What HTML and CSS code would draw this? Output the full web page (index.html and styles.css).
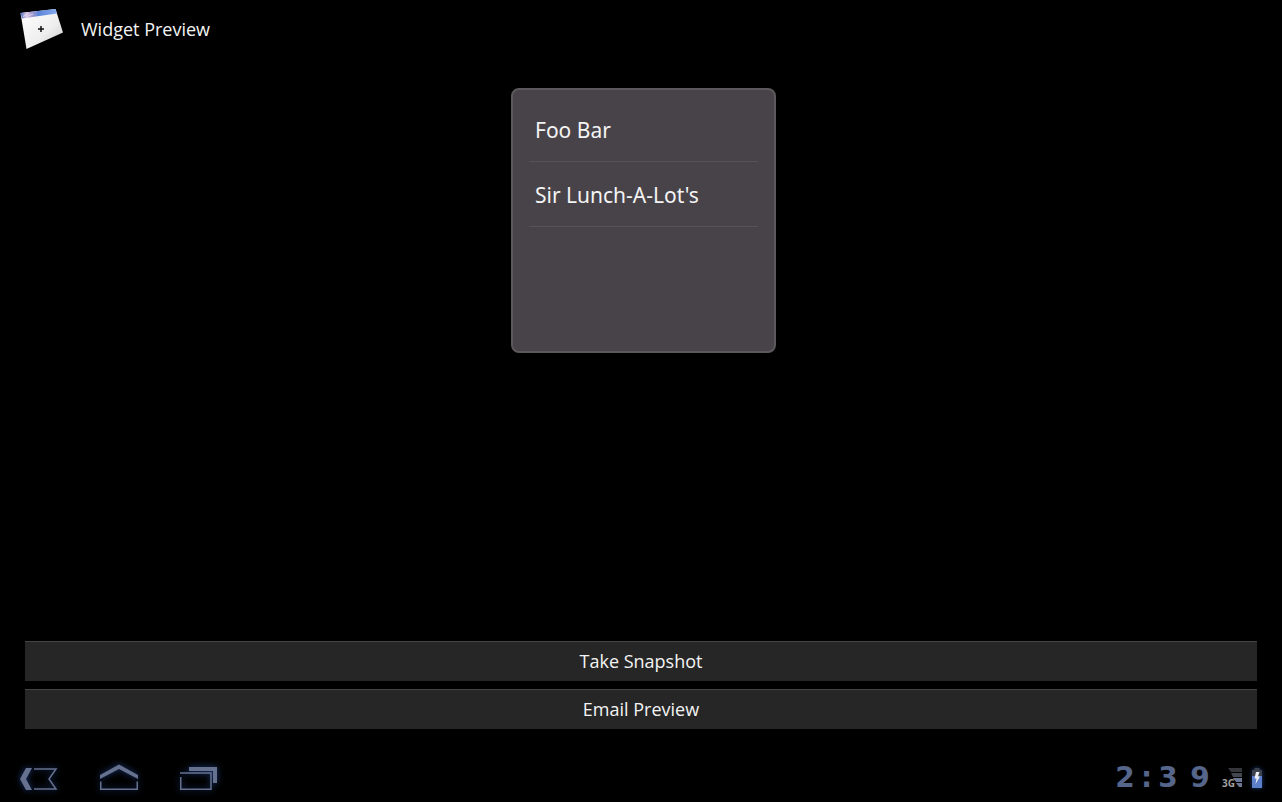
FILE: index.html
```html
<!DOCTYPE html>
<html lang="en">
<head>
<meta charset="utf-8">
<title>Widget Preview</title>
<link rel="stylesheet" href="styles.css">
</head>
<body>
<header class="title-bar">
  <svg class="app-icon" width="56" height="50" viewBox="0 0 56 50" aria-hidden="true">
    <defs>
      <linearGradient id="page" x1="0" y1="0" x2="1" y2="1"><stop offset="0" stop-color="#fff"/><stop offset=".6" stop-color="#eeeeee"/><stop offset="1" stop-color="#c8c8c8"/></linearGradient>
      <linearGradient id="strip" x1="0" y1="0" x2="1" y2="0"><stop offset="0" stop-color="#4568c0"/><stop offset=".15" stop-color="#d8c8e8"/><stop offset=".3" stop-color="#a99bd0"/><stop offset=".5" stop-color="#5c86d8"/><stop offset="1" stop-color="#86aaf0"/></linearGradient>
    </defs>
    <path d="M6.500 9L41.500 5L49 28.500L12.500 45Z" fill="url(#page)"/>
    <path d="M6.500 9L41.500 5L43 9.500L8 14.500Z" fill="url(#strip)"/>
    <path d="M9 12.500L15 9.500M13 12.500L19 10" stroke="#efe4f4" stroke-width="1" opacity=".7"/>
    <path d="M24 25H30M27 22V28" stroke="#111" stroke-width="1.500"/>
  </svg>
  <h1 class="title">Widget Preview</h1>
</header>
<main class="stage">
  <ul class="widget">
    <li class="widget-row">Foo Bar</li>
    <li class="widget-row">Sir Lunch-A-Lot's</li>
  </ul>
</main>
<div class="actions">
  <button class="action" type="button">Take Snapshot</button>
  <button class="action" type="button">Email Preview</button>
</div>
<footer class="system-bar">
  <nav class="nav">
    <button class="nav-button" type="button" aria-label="Back">
      <svg width="60" height="46" viewBox="0 0 60 46"><path d="M16 13H22L16 24L22 35H16L10 24Z" fill="#66718f"/><path d="M24 14H46L39 24L46 34H24" fill="none" stroke="#66718f" stroke-width="1.500"/></svg>
    </button>
    <button class="nav-button" type="button" aria-label="Home">
      <svg width="60" height="46" viewBox="0 0 60 46"><path d="M10 20L29 9.500L48 20V24L29 14L10 24Z" fill="#66718f"/><path d="M10.750 26.500V34.250H47.250V26.500" fill="none" stroke="#66718f" stroke-width="1.500"/></svg>
    </button>
    <button class="nav-button" type="button" aria-label="Recent apps">
      <svg width="60" height="46" viewBox="0 0 60 46"><path d="M19 12H47V28H43V16H19Z" fill="#66718f"/><path d="M10 18H41V34.250H10.750V22" fill="none" stroke="#66718f" stroke-width="1.500"/></svg>
    </button>
  </nav>
  <div class="status">
    <time class="clock" datetime="14:39"><span>2</span><span>:</span><span>3</span><span>9</span></time>
    <div class="signal">
      <svg width="15" height="22" viewBox="0 0 15 22" aria-hidden="true"><path d="M1 1H15V5H4Z" fill="#34363c"/><path d="M4 6H15V10H6Z" fill="#41464f"/><path d="M6 11H15V15H9Z" fill="#6b7894"/><path d="M9 16H15V20H12Z" fill="#6b7894"/></svg>
      <span class="network">3G</span>
    </div>
    <svg class="battery" width="12" height="22" viewBox="0 0 12 22" role="img" aria-label="Battery charging">
      <path d="M3.500 1H8.500V3H11V9H1V3H3.500Z" fill="#3d414b"/><path d="M1 9H11V21H1Z" fill="#5d7fca"/><path d="M5 5H8.500L7 9.500H9L4.500 17L5.500 11.500H3.500Z" fill="#eef0f6"/>
    </svg>
  </div>
</footer>
</body>
</html>
```
FILE: styles.css
```css
* { box-sizing: border-box; }
body {
  margin: 0;
  min-height: 100vh;
  display: flex;
  flex-direction: column;
  background: #000;
  color: #f4f4f4;
  font-family: "Open Sans", "Noto Sans", sans-serif;
}
.title-bar {
  display: flex;
  align-items: center;
  gap: 11px;
  height: 58px;
  padding-left: 14px;
}
.app-icon { display: block; }
.title { margin: 0; font-size: 18px; font-weight: 400; }
.stage {
  flex: 1;
  display: flex;
  justify-content: center;
  align-items: flex-start;
  padding: 30px 0 30px 5px;
}
.widget {
  width: 265px;
  min-height: 265px;
  margin: 0;
  padding: 7px 16px;
  list-style: none;
  background: #484348;
  border: 2px solid #5b595b;
  border-radius: 8px;
}
.widget-row {
  height: 65px;
  padding: 0 6px;
  font-family: "Noto Sans", sans-serif;
  font-size: 21px;
  line-height: 66px;
  border-bottom: 1px solid #565256;
}
.actions {
  display: flex;
  flex-direction: column;
  gap: 8px;
  padding: 0 25px 25px;
}
.action {
  height: 40px;
  padding: 0 0 2px;
  background: #262626;
  border: 0;
  border-top: 1px solid #444;
  color: inherit;
  font: inherit;
  font-size: 18px;
}
.system-bar {
  display: flex;
  justify-content: space-between;
  align-items: center;
  height: 48px;
  padding: 0 19px 0 10px;
}
.nav { display: flex; gap: 20px; }
.nav-button { padding: 0; border: 0; background: none; }
.nav-button svg { display: block; filter: drop-shadow(0 0 3px #1c3a78); }
.status { display: flex; align-items: center; gap: 9px; }
.clock {
  display: grid;
  grid-template-columns: 24px 3px 24px 24px;
  gap: 8px;
  justify-items: center;
  color: #56658a;
  font-family: "DejaVu Sans", sans-serif;
  font-size: 28px;
  font-weight: 700;
  line-height: 48px;
}
.signal { position: relative; padding-left: 6px; }
.signal svg { display: block; }
.network {
  position: absolute;
  left: 1px;
  bottom: 0;
  color: #a0a0a0;
  font-size: 10px;
  font-weight: 700;
  line-height: 12px;
}
.battery { filter: drop-shadow(0 0 2px #1c3a78); }
```
